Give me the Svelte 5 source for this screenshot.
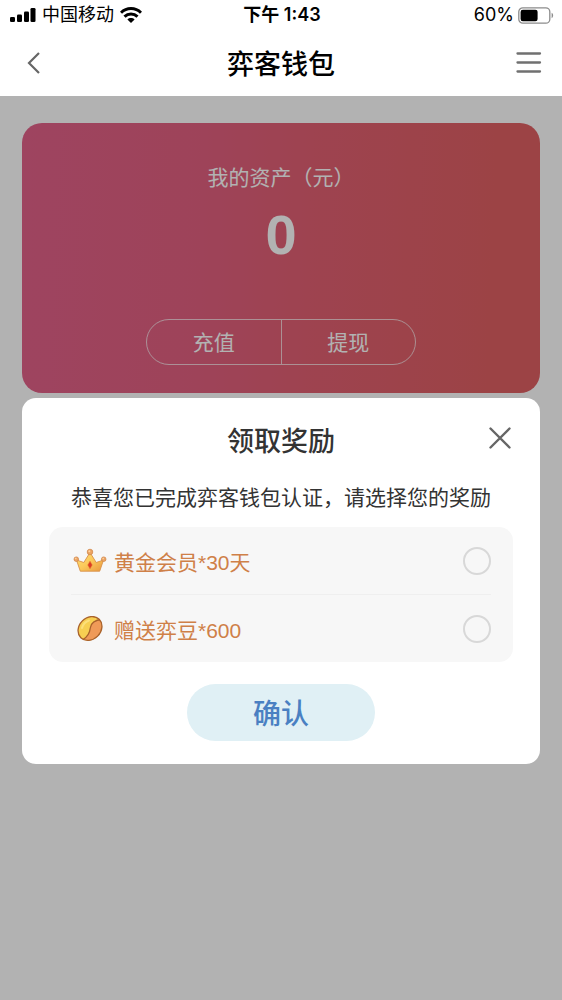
<script>
  let reward = $state('');
</script>

<div class="screen">
  <header>
    <div class="status">
      <div class="carrier">
        <svg width="26" height="14" viewBox="0 0 26 14" aria-hidden="true">
          <rect x="0" y="9" width="5" height="5" rx="1.3" />
          <rect x="7" y="6.5" width="5" height="7.5" rx="1.3" />
          <rect x="14" y="3.5" width="5" height="10.5" rx="1.3" />
          <rect x="20.5" y="0" width="5" height="14" rx="1.3" />
        </svg>
        <span>中国移动</span>
        <svg width="22" height="16" viewBox="0 0 22 16" aria-hidden="true">
          <g fill="none" stroke="#000" stroke-width="3">
            <path d="M1 5.8C6.6.2 15.4.2 21 5.8" />
            <path d="M4.5 9.6c3.7-3.6 9.300-3.6 13 0" />
          </g>
          <path d="M7.400 12.400c2-1.900 5.200-1.900 7.200 0L11 16z" />
        </svg>
      </div>
      <span class="clock">下午 1:43</span>
      <div class="battery">
        <span>60%</span>
        <svg width="36" height="17" viewBox="0 0 36 17" aria-hidden="true">
          <rect x=".8" y=".8" width="31" height="15.4" rx="4" fill="none" stroke="#8c8c8c" stroke-width="1.3" />
          <rect x="2.6" y="2.8" width="17" height="11.4" rx="2.2" />
          <path d="M33.6 5.8c2 .8 2 4.600 0 5.400z" fill="#8c8c8c" />
        </svg>
      </div>
    </div>
    <nav>
      <button class="icon" aria-label="返回">
        <svg width="14" height="24" viewBox="0 0 14 24" aria-hidden="true">
          <path d="M12 2 2 12l10 10" fill="none" stroke="#666" stroke-width="2.2" />
        </svg>
      </button>
      <h1>弈客钱包</h1>
      <button class="icon end" aria-label="菜单">
        <svg width="26" height="24" viewBox="0 0 26 24" aria-hidden="true">
          <path d="M1.500 2.500h22.500M1.500 11.500h22.500M1.500 20.500h22.500" fill="none" stroke="#707070" stroke-width="2.3" stroke-linecap="round" />
        </svg>
      </button>
    </nav>
  </header>

  <main>
    <section class="card">
      <p class="label">我的资产（元）</p>
      <p class="amount">0</p>
      <div class="actions">
        <button>充值</button>
        <button>提现</button>
      </div>
    </section>

    <div class="mask">
      <div class="dialog" role="dialog" aria-modal="true" aria-labelledby="dialog-title">
        <div class="head">
          <h2 id="dialog-title">领取奖励</h2>
          <button class="icon" aria-label="关闭">
            <svg width="24" height="24" viewBox="0 0 24 24" aria-hidden="true">
              <path d="m2.500 2.500 19 19M21.500 2.500l-19 19" fill="none" stroke="#666" stroke-width="2.4" stroke-linecap="round" />
            </svg>
          </button>
        </div>
        <p class="message">恭喜您已完成弈客钱包认证，请选择您的奖励</p>
        <div class="options">
          <label>
            <svg width="34" height="26" viewBox="0 0 34 26" aria-hidden="true">
              <defs>
                <linearGradient id="gold" x1="0" y1="0" x2="1" y2="1">
                  <stop offset="0" stop-color="#ffe27a" />
                  <stop offset=".5" stop-color="#fbc95a" />
                  <stop offset="1" stop-color="#e9963d" />
                </linearGradient>
              </defs>
              <path d="M3.500 12 10.800 14.500 17 4.500l6.200 10 7.300-2.500-3.800 11.200H7.300z" fill="url(#gold)" stroke="#d9914a" stroke-width=".9" stroke-linejoin="round" />
              <g fill="#eba463" stroke="#cf8446" stroke-width=".7">
                <circle cx="17" cy="4" r="2.800" />
                <circle cx="3.300" cy="11.200" r="2.300" />
                <circle cx="30.700" cy="11.200" r="2.300" />
              </g>
              <g fill="#ffd2a0">
                <circle cx="16.300" cy="3.200" r="1" />
                <circle cx="2.800" cy="10.600" r=".8" />
                <circle cx="30.200" cy="10.600" r=".8" />
              </g>
              <path d="M17 13 19.300 17l-2.300 4-2.300-4z" fill="#db3d25" stroke="#ee8b36" stroke-width=".5" stroke-linejoin="round" />
            </svg>
            <span>黄金会员*30天</span>
            <input type="radio" name="reward" value="member" bind:group={reward} />
          </label>
          <label>
            <svg width="34" height="26" viewBox="0 0 34 26" aria-hidden="true">
              <defs>
                <clipPath id="bean"><ellipse cx="17" cy="12.500" rx="13" ry="10.800" transform="rotate(-45 17 12.500)" /></clipPath>
              </defs>
              <g clip-path="url(#bean)">
                <path d="M0 0h34v26H0z" fill="#f7cf52" />
                <path d="M29 3.500C22 4 18 6.500 17.300 12c-.6 5.500-3 9-7.300 11.500V26h24V0z" fill="#ef9a58" />
                <path d="M29 3.500C22 4 18 6.500 17.300 12c-.6 5.500-3 9-7.300 11.500" fill="none" stroke="#a9622c" stroke-width="1.300" />
              </g>
              <path d="M9 12c1-3.600 3.600-6.400 7-7.500" fill="none" stroke="#fde07a" stroke-width="2" stroke-linecap="round" />
              <ellipse cx="17" cy="12.500" rx="13" ry="10.800" transform="rotate(-45 17 12.500)" fill="none" stroke="#a9622c" stroke-width="1.300" />
            </svg>
            <span>赠送弈豆*600</span>
            <input type="radio" name="reward" value="beans" bind:group={reward} />
          </label>
        </div>
        <button class="confirm">确认</button>
      </div>
    </div>
  </main>
</div>

<style>
  :global(body) {
    margin: 0;
  }

  .screen {
    display: flex;
    flex-direction: column;
    min-height: 100vh;
    background: #fff;
    color: #000;
    font-family: "Liberation Sans", "Noto Sans CJK SC", sans-serif;
  }

  h1, h2, p {
    margin: 0;
  }

  button {
    padding: 0;
    border: 0;
    background: none;
    color: inherit;
    font: inherit;
    cursor: pointer;
  }

  svg {
    display: block;
    flex: none;
  }

  .status {
    display: grid;
    grid-template-columns: 1fr auto 1fr;
    align-items: center;
    height: 30px;
    padding: 0 8px 0 10px;
    font-family: Inter, "Noto Sans CJK SC", sans-serif;
    font-size: 18px;
    line-height: 30px;
  }

  .carrier, .battery {
    display: flex;
    align-items: center;
    gap: 6px;
  }

  .battery {
    justify-content: flex-end;
    gap: 4px;
  }

  .clock {
    font-weight: 600;
  }

  nav {
    display: grid;
    grid-template-columns: 40px 1fr 40px;
    align-items: center;
    height: 66px;
    padding: 0 20px 0 27px;
    box-sizing: border-box;
  }

  h1, h2 {
    padding-top: 4px;
    font-size: 27px;
    font-weight: 500;
    line-height: 40px;
    text-align: center;
  }

  h1 {
    margin: 0 7px 0 0;
  }

  .icon {
    justify-self: start;
  }

  .end {
    justify-self: end;
  }

  main {
    position: relative;
    flex: 1;
    padding: 27px 22px;
  }

  .card {
    display: flex;
    flex-direction: column;
    align-items: center;
    padding: 39px 24px 28px;
    border-radius: 20px;
    background: linear-gradient(92deg, #e3628a, #e26180 35%, #e26173 55%, #e06064 90%);
    color: #fff;
  }

  .label {
    font-size: 21px;
    line-height: 32px;
  }

  .amount {
    font-size: 56px;
    font-weight: 700;
    line-height: 82px;
  }

  .actions {
    display: flex;
    width: 270px;
    margin-top: 43px;
    border: 1px solid #ffffffb0;
    border-radius: 24px;
    box-sizing: border-box;
  }

  .actions button {
    flex: 1;
    padding-top: 2px;
    font-size: 21px;
    line-height: 42px;
  }

  .actions button + button {
    border-left: 1px solid #ffffffb0;
  }

  .mask {
    position: absolute;
    inset: 0;
    padding: 302px 22px 24px;
    background: rgba(0, 0, 0, 0.3);
  }

  .dialog {
    display: flex;
    flex-direction: column;
    padding: 20px 27px 23px;
    border-radius: 14px;
    background: #fff;
    color: #333;
  }

  .head {
    display: grid;
    grid-template-columns: 1fr auto 1fr;
    align-items: center;
  }

  h2 {
    grid-column: 2;
  }

  .head .icon {
    justify-self: end;
    margin: 0 1px 4px 0;
  }

  .message {
    margin: 20px 0 13px;
    font-size: 21px;
    line-height: 32px;
    text-align: center;
  }

  .options {
    padding: 0 22px;
    border-radius: 14px;
    background: #f7f7f7;
    color: #cf8048;
  }

  label {
    display: flex;
    align-items: center;
    gap: 7px;
    height: 67px;
    padding-left: 2px;
    font-size: 21px;
    cursor: pointer;
  }

  label + label {
    border-top: 1px solid #efefef;
  }

  input {
    appearance: none;
    width: 28px;
    height: 28px;
    margin: 0 0 0 auto;
    border: 2px solid #d8d8d8;
    border-radius: 50%;
    box-sizing: border-box;
  }

  input:checked {
    border: 8px solid #4c80c0;
  }

  .confirm {
    align-self: center;
    width: 188px;
    margin-top: 22px;
    padding-top: 5px;
    border-radius: 29px;
    background: #e0f0f5;
    color: #4a80c2;
    font-size: 28px;
    font-weight: 500;
    line-height: 52px;
  }
</style>
